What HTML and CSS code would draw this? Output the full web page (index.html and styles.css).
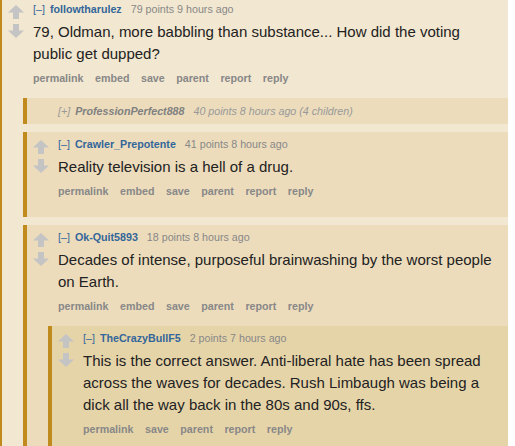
FILE: index.html
```html
<!DOCTYPE html>
<html lang="en">
<head>
<meta charset="utf-8">
<title>Comments</title>
<link rel="stylesheet" href="styles.css">
</head>
<body>
<div class="thread">
  <div class="comment top">
    <div class="row">
      <div class="midcol">
        <svg class="arrow" viewBox="0 0 16 14"><path d="M8 0 L16 7.5 L11 7.5 L11 14 L5 14 L5 7.5 L0 7.5 Z"/></svg>
        <svg class="arrow" viewBox="0 0 16 14"><path d="M5 0 L11 0 L11 6.5 L16 6.5 L8 14 L0 6.5 L5 6.5 Z"/></svg>
      </div>
      <div class="entry">
        <p class="tagline"><a class="expand">[–]</a> <a class="author">followtharulez</a> <span class="score">79 points</span> <time>9 hours ago</time></p>
        <div class="md"><p>79, Oldman, more babbling than substance... How did the voting public get dupped?</p></div>
        <ul class="buttons"><li>permalink</li><li>embed</li><li>save</li><li>parent</li><li>report</li><li>reply</li></ul>
      </div>
    </div>
    <div class="child">
      <div class="comment collapsed">
        <p class="tagline"><a class="expand">[+]</a> <a class="author">ProfessionPerfect888</a> <span class="score">40 points</span> <time>8 hours ago</time> (4 children)</p>
      </div>
      <div class="comment">
        <div class="row">
          <div class="midcol">
            <svg class="arrow" viewBox="0 0 16 14"><path d="M8 0 L16 7.5 L11 7.5 L11 14 L5 14 L5 7.5 L0 7.5 Z"/></svg>
            <svg class="arrow" viewBox="0 0 16 14"><path d="M5 0 L11 0 L11 6.5 L16 6.5 L8 14 L0 6.5 L5 6.5 Z"/></svg>
          </div>
          <div class="entry">
            <p class="tagline"><a class="expand">[–]</a> <a class="author">Crawler_Prepotente</a> <span class="score">41 points</span> <time>8 hours ago</time></p>
            <div class="md"><p>Reality television is a hell of a drug.</p></div>
            <ul class="buttons"><li>permalink</li><li>embed</li><li>save</li><li>parent</li><li>report</li><li>reply</li></ul>
          </div>
        </div>
      </div>
      <div class="comment">
        <div class="row">
          <div class="midcol">
            <svg class="arrow" viewBox="0 0 16 14"><path d="M8 0 L16 7.5 L11 7.5 L11 14 L5 14 L5 7.5 L0 7.5 Z"/></svg>
            <svg class="arrow" viewBox="0 0 16 14"><path d="M5 0 L11 0 L11 6.5 L16 6.5 L8 14 L0 6.5 L5 6.5 Z"/></svg>
          </div>
          <div class="entry">
            <p class="tagline"><a class="expand">[–]</a> <a class="author">Ok-Quit5893</a> <span class="score">18 points</span> <time>8 hours ago</time></p>
            <div class="md"><p>Decades of intense, purposeful brainwashing by the worst people on Earth.</p></div>
            <ul class="buttons"><li>permalink</li><li>embed</li><li>save</li><li>parent</li><li>report</li><li>reply</li></ul>
          </div>
        </div>
        <div class="child">
          <div class="comment deep">
            <div class="row">
              <div class="midcol">
                <svg class="arrow" viewBox="0 0 16 14"><path d="M8 0 L16 7.5 L11 7.5 L11 14 L5 14 L5 7.5 L0 7.5 Z"/></svg>
                <svg class="arrow" viewBox="0 0 16 14"><path d="M5 0 L11 0 L11 6.5 L16 6.5 L8 14 L0 6.5 L5 6.5 Z"/></svg>
              </div>
              <div class="entry">
                <p class="tagline"><a class="expand">[–]</a> <a class="author">TheCrazyBullF5</a> <span class="score">2 points</span> <time>7 hours ago</time></p>
                <div class="md"><p>This is the correct answer. Anti-liberal hate has been spread across the waves for decades. Rush Limbaugh was being a dick all the way back in the 80s and 90s, ffs.</p></div>
                <ul class="buttons"><li>permalink</li><li>save</li><li>parent</li><li>report</li><li>reply</li></ul>
              </div>
            </div>
          </div>
        </div>
      </div>
    </div>
  </div>
</div>
</body>
</html>
```

FILE: styles.css
```css
html, body {
  margin: 0;
  padding: 0;
  background: #ffffff;
  overflow: hidden;
}

body {
  font-family: "Liberation Sans", Arial, sans-serif;
}

.thread {
  width: 508px;
}

.comment {
  background: #ecdcbc;
  border-left: 4px solid #c08b1c;
  padding: 5px 0 6px;
}

.comment.top {
  background: #f2e7d0;
  border-left-width: 2px;
  padding-top: 2px;
}

.comment.deep {
  background: #e6d4a9;
}

.row {
  display: flex;
}

.midcol {
  flex: 0 0 31px;
  box-sizing: border-box;
  padding: 3px 0 0 6px;
  display: flex;
  flex-direction: column;
  gap: 5px;
}

.arrow {
  display: block;
  width: 16px;
  height: 14px;
  fill: #c4c4c4;
}

.entry {
  flex: 1;
  min-width: 0;
  padding-right: 10px;
}

.tagline {
  margin: 0;
  font-size: 10.7px;
  line-height: 14px;
  color: #888888;
  white-space: nowrap;
}

.expand {
  color: #336699;
  margin-right: 2px;
}

.author {
  color: #336699;
  font-weight: bold;
  margin-right: 6px;
}

.md {
  margin-top: 5px;
  font-size: 15px;
  line-height: 22px;
  color: #222222;
}

.md p {
  margin: 0;
}

.buttons {
  list-style: none;
  margin: 6px 0 13px;
  padding: 0;
  display: flex;
  gap: 11.5px;
  font-size: 10.7px;
  line-height: 14px;
  font-weight: bold;
  color: #888888;
}

.child {
  margin-left: 21px;
  display: flex;
  flex-direction: column;
  gap: 8px;
}

.comment.collapsed {
  padding: 6px 0 6px 31px;
}

.collapsed .tagline {
  font-style: italic;
  color: #999999;
}

.collapsed .expand {
  color: #999999;
}

.collapsed .author {
  color: #808080;
}
```
